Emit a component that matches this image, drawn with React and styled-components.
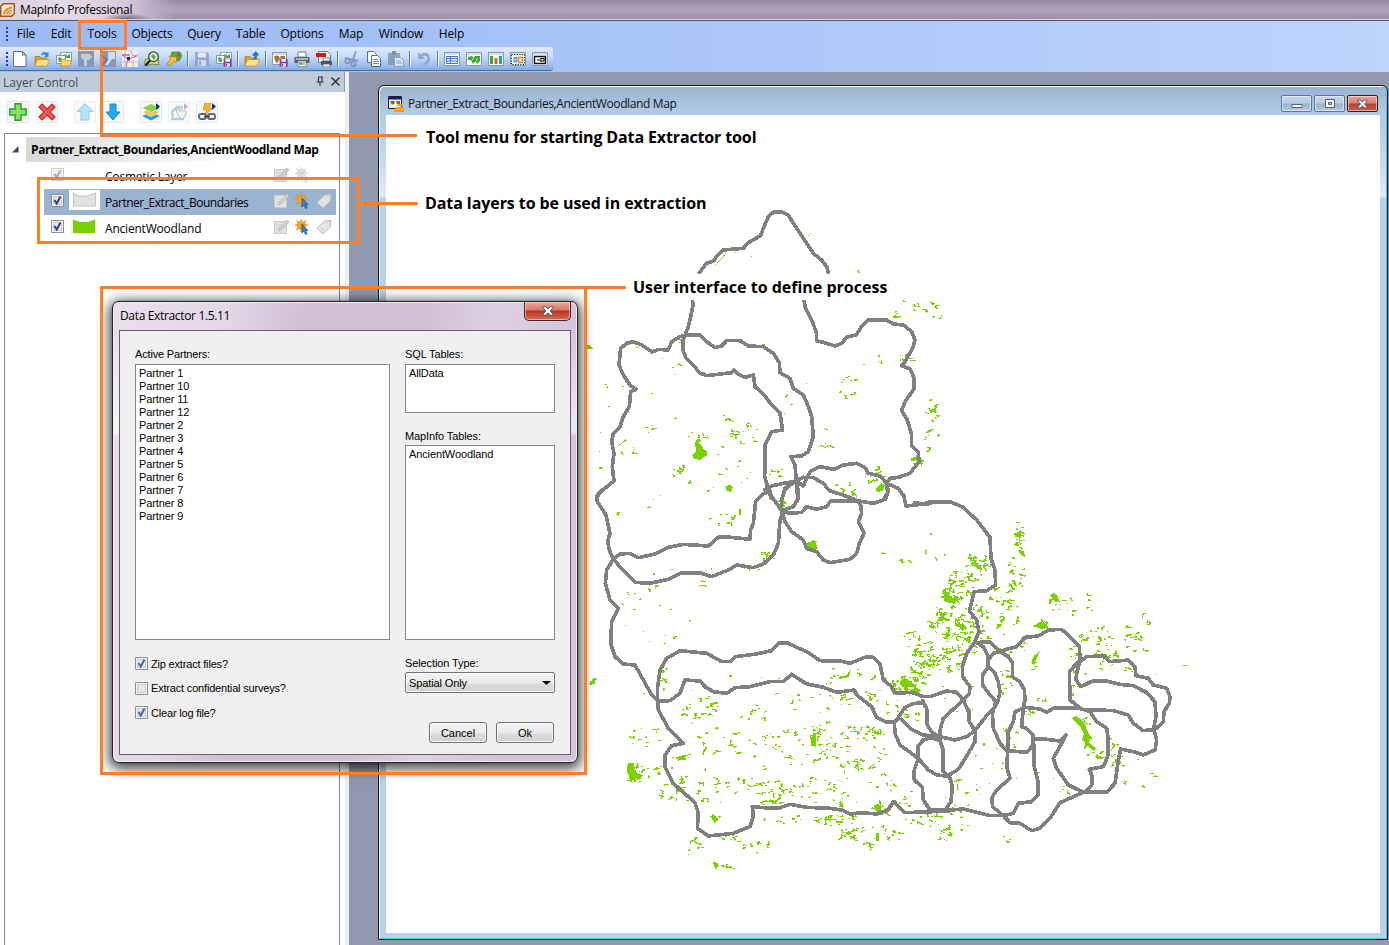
import React from 'react';
import styled, { createGlobalStyle } from 'styled-components';

const ORANGE = '#ff7f27';
const UI = "'Open Sans', 'Noto Sans', sans-serif";

const Global = createGlobalStyle`
  * { box-sizing: border-box; }
  html, body { margin: 0; padding: 0; overflow: hidden; }
`;

const Screen = styled.div`
  position: relative;
  width: 1389px;
  height: 945px;
  overflow: hidden;
  display: flex;
  flex-direction: column;
  background: #9199ae;
  font: 12px ${UI};
  color: #000;
`;

const Text = styled.span`
  white-space: nowrap;
  letter-spacing: ${(p) => p.$ls || 0}px;
`;

/* ---------- application frame ---------- */
const TitleBar = styled.header`
  flex: none;
  height: 21px;
  display: flex;
  align-items: center;
  gap: 5px;
  padding-bottom: 1px;
  border-bottom: 1px solid #5c5361;
  box-shadow: inset 0 -1px 0 #ddd3e2;
  background:
    radial-gradient(ellipse 26px 7px at 127px 20px, #63586a 0%, rgba(99, 88, 106, 0) 100%),
    linear-gradient(90deg, #dccfe0 0, #e5dbe8 60px, #d8cadc 125px, #bdaec6 150px, rgba(172, 157, 184, 0) 175px),
    linear-gradient(180deg, #93859d 0, #a899b3 5px, #b1a3bb 10px, #a091ad 18px);
`;

const MenuBar = styled.nav`
  flex: none;
  height: 26px;
  display: flex;
  align-items: center;
  padding-bottom: 1px;
  background: linear-gradient(90deg, #9dbbf4 0, #a4c2f7 500px, #bdd5fb 1389px);
`;

const MenuItem = styled.span`
  width: ${(p) => p.$w}px;
  text-align: center;
  white-space: nowrap;
  letter-spacing: -0.15px;
`;

const ToolbarRow = styled.div`
  flex: none;
  height: 25px;
  background: linear-gradient(90deg, #9dbbf4 0, #a4c2f7 500px, #bdd5fb 1389px);
`;

const Toolbar = styled.div`
  width: 553px;
  height: 24px;
  display: flex;
  align-items: center;
  border-radius: 0 3px 3px 0;
  border-bottom: 1px solid #3f6fb5;
  background: linear-gradient(180deg, #dfeafc 0, #cadcf8 9px, #a5c3ef 17px, #82abe2 23px);
`;

const ToolCell = styled.span`
  width: 22px;
  height: 22px;
  display: flex;
  align-items: center;
  justify-content: center;
  opacity: ${(p) => (p.$off ? 0.75 : 1)};
`;

const Separator = styled.i`
  width: 2px;
  height: 15px;
  margin: 0 2px;
  border-left: 1px solid #5c7fb8;
  border-right: 1px solid #eff5ff;
`;

const Grip = styled.i`
  width: 2px;
  height: 14px;
  margin: 0 ${(p) => p.$right || 1}px 0 6px;
  background: repeating-linear-gradient(180deg, #27408b 0 2px, transparent 2px 4px);
`;

const Workspace = styled.main`
  flex: 1;
  min-height: 0;
  display: flex;
`;

/* ---------- layer control ---------- */
const Panel = styled.aside`
  flex: none;
  width: 349px;
  display: flex;
  flex-direction: column;
  background: #fff;
  border-right: 4px solid #f0f0f0;
`;

const PanelHeader = styled.div`
  flex: none;
  height: 20px;
  display: flex;
  align-items: center;
  padding: 0 3px 0 3px;
  color: #444b55;
  background: #bfcddb;
  border-right: 1px solid #8d9aa8;
  svg { margin: 0 0 2px 5px; }
  span { flex: 1; }
`;

const PanelTools = styled.div`
  flex: none;
  height: 41px;
  display: flex;
  align-items: center;
  padding: 0 0 1px 7px;
`;

const PanelButton = styled.span`
  width: 22px;
  height: 22px;
  margin-right: ${(p) => p.$gap || 6}px;
  border: 1px solid #e4e7ea;
  border-radius: 2px;
  background: #f7f8f9;
  display: flex;
  align-items: center;
  justify-content: center;
  opacity: ${(p) => (p.$off ? 0.65 : 1)};
`;

const Tree = styled.div`
  flex: 1;
  width: 336px;
  margin-left: 4px;
  padding-top: 3px;
  border: 1px solid #828790;
  border-bottom: 0;
`;

const TreeHead = styled.div`
  height: 26px;
  display: flex;
  align-items: flex-start;
  padding-left: 6px;
  font-weight: 700;
  svg { margin: 8px 7px 0 0; }
`;

const TreeTitle = styled.div`
  height: 25px;
  line-height: 26px;
  padding-left: 5px;
  white-space: nowrap;
  letter-spacing: -0.41px;
  background: linear-gradient(90deg, #d8d8d8, #fff 205px);
`;

const LayerRow = styled.div`
  height: 26px;
  margin: 0 3px 0 39px;
  display: flex;
  align-items: center;
  background: ${(p) => (p.$selected ? '#9ab3d1' : 'transparent')};
`;

const LayerCheck = styled.span`
  width: 25px;
  padding: 0 0 4px 7px;
  line-height: 0;
  opacity: ${(p) => (p.$dim ? 0.45 : 1)};
`;

const Swatch = styled.span`
  width: 31px;
  height: 20px;
  margin-bottom: 4px;
  background: ${(p) => (p.$boxed ? '#fff' : 'transparent')};
  line-height: 0;
`;

const LayerName = styled.span`
  flex: 1;
  padding: 1px 0 0 5px;
  white-space: nowrap;
  letter-spacing: ${(p) => p.$ls || -0.2}px;
`;

const LayerIcons = styled.span`
  width: 64px;
  display: flex;
  gap: 5px;
  padding-left: 2px;
  margin-bottom: 3px;
`;

/* ---------- map window ---------- */
const Desktop = styled.section`
  flex: 1;
  padding: 13px 1px 4px 29px;
`;

const MapWindow = styled.div`
  width: 1010px;
  height: 855px;
  padding: 0 6px 6px;
  display: flex;
  flex-direction: column;
  border: 1px solid #14181e;
  border-radius: 6px 6px 0 0;
  box-shadow: inset 1px 1px 0 #fff, inset -1px -1px 0 #3fd0e4;
  background: linear-gradient(180deg, #98b3d0 0, #b4cce6 29px, #bdd3eb 60px, #dfeaf6 110px, #b9d1ea 112px);
`;

const MapTitle = styled.div`
  flex: none;
  height: 29px;
  display: flex;
  align-items: center;
  padding: 6px 3px 0 3px;
  color: #10151d;
  ${Text} { flex: 1; padding-left: 4px; }
`;

const MapClient = styled.div`
  flex: 1;
  margin-left: 1px;
  margin-right: 1px;
  background: #fff;
  line-height: 0;
`;

const WinButton = styled.span`
  width: 31px;
  height: 17px;
  margin-left: 2px;
  display: flex;
  align-items: center;
  justify-content: center;
  border: 1px solid ${(p) => (p.$close ? '#43131a' : '#5f7794')};
  border-radius: 2px;
  box-shadow: inset 0 0 0 1px rgba(255, 255, 255, 0.5);
  background: ${(p) =>
    p.$close
      ? 'linear-gradient(180deg, #e5a395 0, #d98272 7px, #b7402b 8px, #c9604a 15px)'
      : 'linear-gradient(180deg, #c3d6ea 0, #b6cce3 7px, #98b3d0 8px, #b3cbe4 15px)'};
`;

/* ---------- dialog ---------- */
const Dialog = styled.section`
  position: absolute;
  left: 112px;
  top: 301px;
  width: 466px;
  height: 462px;
  padding: 0 6px 7px;
  display: flex;
  flex-direction: column;
  border: 1px solid #222;
  border-radius: 7px;
  box-shadow: inset 0 0 0 1px #f6eff8, 0 0 1px #222, 0 3px 13px 3px rgba(0, 0, 0, 0.72);
  background:
    linear-gradient(180deg, rgba(255, 255, 255, 0) 30px, rgba(255, 255, 255, 0.65) 130px, rgba(255, 255, 255, 0) 134px),
    linear-gradient(100deg, #eadfed 0, #e4d8e8 110px, #d2bfd6 190px, #d2bfd6 310px, #ded0e3 380px, #d5c3d9 466px);
  font: 11px 'Liberation Sans', Arial, sans-serif;
  letter-spacing: -0.12px;
`;

const DialogTitle = styled.div`
  flex: none;
  height: 28px;
  display: flex;
  justify-content: space-between;
  align-items: flex-start;
  font: 12px ${UI};
  ${Text} { padding: 5px 0 0 1px; }
`;

const DialogClose = styled.span`
  width: 47px;
  height: 19px;
  display: flex;
  align-items: center;
  justify-content: center;
  border: 1px solid #4b2029;
  border-top: 0;
  border-radius: 0 0 5px 5px;
  box-shadow: inset 0 0 0 1px rgba(255, 255, 255, 0.45);
  background: linear-gradient(180deg, #e6a79b 0, #d87767 8px, #b83322 9px, #d66c55 18px);
`;

const DialogBody = styled.div`
  flex: 1;
  padding: 16px 16px 11px 15px;
  display: grid;
  grid-template-columns: 255px 150px;
  column-gap: 15px;
  border: 1px solid #665d6a;
  background: #f0f0f0;
`;

const Column = styled.div`
  display: flex;
  flex-direction: column;
`;

const FieldLabel = styled.div`
  height: ${(p) => p.$h || 17}px;
  line-height: 14px;
  white-space: nowrap;
  letter-spacing: ${(p) => p.$ls || -0.1}px;
`;

const ListBox = styled.div`
  height: ${(p) => p.$h}px;
  margin-bottom: ${(p) => p.$mb}px;
  padding: 2px 3px;
  border: 1px solid #828790;
  background: #fff;
  line-height: 13px;
`;

const CheckRow = styled.label`
  height: 13px;
  margin-bottom: 11.5px;
  display: flex;
  align-items: center;
  gap: 3px;
  white-space: nowrap;
  letter-spacing: -0.18px;
`;

const Select = styled.div`
  height: 21px;
  margin-top: 1px;
  display: flex;
  align-items: center;
  justify-content: space-between;
  padding: 0 3px 0 3px;
  border: 1px solid #707070;
  border-radius: 2px;
  box-shadow: inset 0 0 0 1px #fafafa;
  background: linear-gradient(180deg, #f2f2f2 0, #ebebeb 10px, #dcdcdc 11px, #cfcfcf 20px);
`;

const ButtonRow = styled.div`
  display: flex;
  justify-content: flex-end;
  gap: 9px;
  margin: 29px 1px 0 -20px;
`;

const Button = styled.div`
  width: 58px;
  height: 21px;
  line-height: 20px;
  text-align: center;
  letter-spacing: 0;
  border: 1px solid #707070;
  border-radius: 3px;
  box-shadow: inset 0 0 0 1px #fafafa;
  background: linear-gradient(180deg, #f2f2f2 0, #ebebeb 10px, #dcdcdc 11px, #cfcfcf 20px);
`;

/* ---------- annotations ---------- */
const Frame = styled.div`
  position: absolute;
  left: ${(p) => p.$x}px;
  top: ${(p) => p.$y}px;
  width: ${(p) => p.$w}px;
  height: ${(p) => p.$h}px;
  border: 3px solid ${ORANGE};
`;

const Rule = styled.div`
  position: absolute;
  left: ${(p) => p.$x}px;
  top: ${(p) => p.$y}px;
  width: ${(p) => p.$w}px;
  height: ${(p) => p.$h}px;
  background: ${ORANGE};
`;

const Note = styled.div`
  position: absolute;
  left: ${(p) => p.$x}px;
  top: ${(p) => p.$y}px;
  width: ${(p) => p.$w}px;
  height: 26px;
  background: #fff;
  font: 700 16px/26px 'Open Sans', sans-serif;
  letter-spacing: ${(p) => p.$ls}px;
  white-space: nowrap;
`;

/* ---------- icons ---------- */
const Svg = ({ children, s = 16, h }) => (
  <svg width={s} height={h || s} viewBox={`0 0 ${s} ${h || s}`}>{children}</svg>
);

const Folder = ({ y = 0 }) => (
  <g transform={`translate(0 ${y})`}>
    <path d="M1 13V4h5l1 1.5h6V13z" fill="#d9a02c" stroke="#a5741a" strokeWidth=".7" />
    <path d="M1 13.500l2.500-6.500h12L13 13.500z" fill="#ffe08a" stroke="#c48e25" strokeWidth=".7" />
  </g>
);
const Disk = ({ x = 0, y = 0, k = 1, c = '#7c3f9b' }) => (
  <g transform={`translate(${x} ${y}) scale(${k})`}>
    <path d="M1 1h12l2 2v12H1z" fill={c} />
    <path d="M4 1.500h8v5H4z" fill="#eef" />
    <path d="M4 9h8v6H4z" fill="#dde" />
    <path d="M5 10h2v4H5z" fill={c} />
  </g>
);
const WinBase = ({ children }) => (
  <g>
    <path d="M.5 1.500h15v13H.5z" fill="#fff" stroke="#8496b3" />
    <path d="M1 2h14v2H1z" fill="#d7dfe9" />
    {children}
  </g>
);

const icons = {
  fresh: <path d="M1.500.5h9l3.500 3.500v11.500H1.500zM10.500.5V4H14" fill="#fff" stroke="#5f6f88" />,
  open: <g><Folder y={1.5} /><path d="M7 4c1-3 4-4 6-2l1.500-1v5H10l1.500-1.500C10.500 3 9 3 8 4.500z" fill="#2f8fd8" /></g>,
  openWin: <g><path d="M4.500 1.500h11v9h-11z" fill="#fff" stroke="#7f9abd" /><path d="M7 4l3-1 1 2 3-2v4H7z" fill="#5aa33e" /><path d="M.5 4.500v8h9v-8z" fill="#f4f9ff" stroke="#7f9abd" /><path d="M2 7l2-1 2 2v3H3z" fill="#5aa33e" /><path d="M5 15V8.500h4l1 1h5.500L14 15z" fill="#fbd566" stroke="#b8882a" strokeWidth=".7" /></g>,
  grayA: <g><path d="M0 0h16v16H0z" fill="#8797b8" /><path d="M3 3h9l2 3-3 3H9v6H6V9L3 7z" fill="#c3cde0" /></g>,
  grayB: <g><path d="M0 0h16v16H0z" fill="#8797b8" /><path d="M8 1h7v7h-3l-4 6H5l3-6z" fill="#d3dcea" /><path d="M1 4l6 5-5 6" stroke="#6b7ca0" fill="none" strokeWidth="2" /></g>,
  grid: <g><path d="M0 0h16v16H0z" fill="#f3efe9" /><path d="M9 0l2 5 5-1" stroke="#cf8fc9" fill="none" /><path d="M3 0v16M0 11h16M11 9v7" stroke="#b9b3a6" strokeWidth=".8" /><path d="M0 4l6 4M6 8l-2 8M6 8l9-3" stroke="#c06fc0" fill="none" /><path d="M0 4h8M7 7v3" stroke="#7a3fa0" fill="none" /><path d="M5 6h3v3H5z" fill="#2d1f9a" /></g>,
  find: <g><path d="M1 9l4-2 9 0 1 7-7-1-7 2z" fill="#e9e05a" stroke="#6e8b2b" /><circle cx="9.500" cy="5.700" r="4.800" fill="#dff2d8" stroke="#3f4a44" strokeWidth="1.300" /><path d="M7 5l2-2 3 3-2 3z" fill="#4caf3c" /><path d="M6 9.500L1.500 14.500" stroke="#222" strokeWidth="2.400" /></g>,
  pick: <g><path d="M6 1h8l2 4-3 5-6-1-2-4z" fill="#48b047" stroke="#2b7c2a" strokeWidth=".6" /><circle cx="12.500" cy="4" r="1.700" fill="#e33" /><path d="M3 5l8 1-1 6-2-2-4 5-3-2 4-5z" fill="#f9c433" stroke="#a97412" strokeWidth=".8" /></g>,
  save: <Disk c="#8c9bb8" />,
  saveWin: <g><path d="M4.500 1.500h11v8h-11z" fill="#fff" stroke="#7f9abd" /><path d="M7 4l3-1 1 2 3-2v4H7z" fill="#5aa33e" /><path d="M.5 4.500v8h8v-8z" fill="#f4f9ff" stroke="#7f9abd" /><path d="M2 7l2-1 2 2v3H3z" fill="#5aa33e" /><Disk x={7} y={7} k={0.58} /></g>,
  openBlue: <g><Folder y={1.500} /><path d="M12 0l3 4-2 1c0 3-2 4-4 4 1-1 2-3 1-4l-2-1z" fill="#2878c8" /></g>,
  saveMap: <g><path d="M.5 1.500h14v12H.5z" fill="#fff" stroke="#8a97a8" /><path d="M1 2h13v2H1z" fill="#d7dfe9" /><path d="M2 5l4-.5 2 3-3 5-2-3zM8 5h5v4l-3 1z" fill="#a8752e" /><Disk x={7} y={7} k={0.58} /></g>,
  print: <g><path d="M4 1h8v5H4z" fill="#fff" stroke="#566" strokeWidth=".8" /><path d="M.5 6h15v6H.5z" fill="#59626e" /><path d="M2 7h12v2H2z" fill="#aab4c0" /><path d="M4 10h8v5.500H4z" fill="#fff" stroke="#566" strokeWidth=".6" /><path d="M5 11h3v3H5z" fill="#38b6d8" /><path d="M8 11h3v3H8z" fill="#f2b63a" /></g>,
  pdf: <g><path d="M2.500.5h9l3 3v8h-12z" fill="#fff" stroke="#778" /><path d="M0 2h10v4H0z" fill="#d8141a" /><path d="M5 10h11v4H5z" fill="#4f5a66" /><path d="M7 7h7v3H7zM7 13h7v3H7z" fill="#e9eef3" stroke="#4f5a66" strokeWidth=".7" /></g>,
  cut: <g fill="none" stroke="#7486aa" strokeWidth="1.800"><path d="M12 0L8 11M1 7l13 3" /><circle cx="3.500" cy="10" r="2.200" /><circle cx="9.500" cy="13" r="2.200" /></g>,
  copy: <g fill="#fff" stroke="#566c92"><path d="M1.500.5h6l3 3v8h-9z" /><path d="M5.500 4.500h6l3 3v8h-9z" /><path d="M7 8.500h5M7 10.500h6M7 12.500h6" strokeWidth=".8" /></g>,
  paste: <g><path d="M0 2h12v12H0z" fill="#7c8cac" /><path d="M4 0h4v4H4z" fill="#66789c" /><path d="M6.500 6.500h6l3 3v6h-9z" fill="#edf1f7" stroke="#8192b0" /><path d="M8 10h5M8 12h6" stroke="#8192b0" /></g>,
  undo: <path d="M2 1v7h7L6.500 5.500c3-2 6 0 5 3-1 2-3 3-5 6 5-1 8-4 7.500-8.500-1-5-6-5.500-9.500-2.500z" fill="#8296ba" />,
  browse: <WinBase><path d="M2.500 5.500h11v7h-11z" fill="#e6f0ff" stroke="#3a72cc" /><path d="M3 7.500h10M3 10h10M6.500 5.500v7" stroke="#3a72cc" strokeWidth=".9" /></WinBase>,
  mapWin: <WinBase><path d="M2 6l4-1 1.500 2 1.500-2h5v5l-3 3-1.500-3L7 13 5 9H2z" fill="#33ab2d" /><path d="M6 9l2-2M11 7v3" stroke="#fff" strokeWidth=".8" /></WinBase>,
  graphWin: <WinBase><path d="M2 5h3v8H2z" fill="#33ab2d" /><path d="M6.500 7h3v6h-3z" fill="#f05a18" /><path d="M11 5h3v8h-3z" fill="#1ba5b8" /></WinBase>,
  layoutWin: <WinBase><path d="M1.500 3.500h13v10h-13z" fill="none" stroke="#222" strokeDasharray="1.200 1.400" /><path d="M4 6.500h3v4.500H4z" fill="#9fd0f5" stroke="#2878c8" strokeWidth=".8" /><path d="M8.500 6.500h4v5h-4z" fill="#fff" stroke="#f08018" strokeWidth="1.500" /></WinBase>,
  redistrict: <WinBase><path d="M2.500 5.500h11v7h-11z" fill="#fff" stroke="#111" strokeWidth="1.400" /><path d="M5 9h4v2M8 7.500h4V10H9" fill="none" stroke="#111" strokeWidth="1.200" /></WinBase>,
};

const toolbarItems = [
  'fresh', 'open', 'openWin', 'grayA', 'grayB', 'grid', 'find', 'pick', '|', 'save', 'saveWin', '|', 'openBlue', '|',
  'saveMap', 'print', 'pdf', '|', 'cut', 'copy', 'paste', '|', 'undo', '|', 'browse', 'mapWin', 'graphWin', 'layoutWin', 'redistrict',
];
const disabled = ['cut', 'paste', 'undo', 'save'];

const Check = ({ on, mark = '#2e3f7c' }) => (
  <Svg s={13}>
    <path d="M.5.5h12v12H.5z" fill="#f4f4f4" stroke="#8e8f8f" />
    <path d="M2.500 2.500h8v8h-8z" fill="#e3e6ea" stroke="#c9cdd2" />
    {on && <path d="M3.500 6l2.200 3.500L9.500 2.500" fill="none" stroke={mark} strokeWidth="1.900" />}
  </Svg>
);

const Cross = ({ w = 12 }) => (
  <svg width={w} height="10" viewBox="0 0 12 10">
    <path d="M1 .7h3L6 3l2-2.300h3v1L8.300 5 11 8.300v1H8L6 7 4 9.300H1v-1L3.700 5 1 1.700z" fill="#f4f6f8" stroke="#4d5566" strokeWidth="1" />
  </svg>
);

const PencilIcon = () => (
  <Svg s={16}><path d="M.5 2.500h12v12H.5z" fill="#e2e2e2" stroke="#c9c9c9" /><path d="M2 6h6M2 9h5" stroke="#cfcfcf" /><path d="M4.500 12l1-3L13 1l2 2-8 8z" fill="#d2d2d2" stroke="#b3b3b3" strokeWidth=".8" /></Svg>
);
const SelectIcon = ({ dim }) => (
  <Svg s={16}>
    <path d="M6 0l1.200 3.500L11 1.500 9.300 5l3.700 1-3.700 1.500L11 11 7.200 9.300 6 13 4.800 9.300 1.500 11 3 7.500 0 6l3-1-1.500-3.500 3.300 2z" fill={dim ? '#dcdcdc' : '#f7a41d'} stroke={dim ? '#d0d0d0' : '#d9820a'} strokeWidth=".5" />
    <path d="M7 5v9l2-2 1.500 3.500 1.700-.8L10.700 11.500H13z" fill={dim ? '#e6e6e6' : '#3f83c4'} stroke={dim ? '#cacaca' : '#1c4f88'} strokeWidth=".7" />
  </Svg>
);
const TagIcon = () => (
  <Svg s={16}><path d="M1 9.500L8.500 2 15 1.500 14.500 8 7 15z" fill="#e4e4e4" stroke="#bdbdbd" /><circle cx="12" cy="4.300" r="1.200" fill="#fff" stroke="#bbb" strokeWidth=".6" /><path d="M5 9l3 3" stroke="#c5c5c5" /></Svg>
);

const panelIcons = [
  { gap: 7, art: <path d="M6 .8h6V6h5.200v6H12v5.200H6V12H.8V6H6z" fill="#8ade63" stroke="#2ba02a" strokeWidth="1.500" /> },
  { gap: 16, art: <path d="M4 1l5 5 5-5 3 3-5 5 5 5-3 3-5-5-5 5-3-3 5-5-5-5z" fill="#ee5a50" stroke="#c32a26" strokeWidth="1.200" /> },
  { gap: 6, off: true, art: <path d="M9 .5L17 8.500h-4V17H5V8.500H1z" fill="#8fd6fa" stroke="#4bb0e4" /> },
  { gap: 16, art: <path d="M6 1h6v8h4l-7 8-7-8h4z" fill="#27a8ec" stroke="#1788cc" /> },
  { gap: 6, art: <g><path d="M0 13l9-4 9 4-9 4.500z" fill="#2e9fd6" /><path d="M0 9l9-4 9 4-9 4.500z" fill="#f6c445" stroke="#fff" strokeWidth=".6" /><path d="M0 5l9-4.500 9 4.500-9 4.500z" fill="#8bd24c" stroke="#fff" strokeWidth=".6" /><path d="M14 0l4 3.500-4 3.500z" fill="#12347a" /></g> },
  { gap: 6, off: true, art: <g><path d="M1 16h13M3 14l-1-5 5-5 4 1" stroke="#7fb2d6" strokeWidth="2.400" fill="none" /><path d="M6 7l2-1 2 3V3h2v5h4l-1 6-3 2-4-3z" fill="#e9edf1" stroke="#8b98a6" strokeWidth=".9" /><path d="M14 0l4 3.500-4 3.500z" fill="#7d95b8" /></g> },
  { gap: 0, art: <g><path d="M7 0h6l-2 5h4l-8 7 2-5H5z" fill="#f8b52b" stroke="#c8860f" strokeWidth=".7" /><rect x="1" y="11" width="7" height="5" rx="2" fill="none" stroke="#59687a" strokeWidth="1.800" /><rect x="10" y="11" width="7" height="5" rx="2" fill="none" stroke="#59687a" strokeWidth="1.800" /><path d="M6 13.500h6" stroke="#3e4c5c" strokeWidth="1.600" /><path d="M14 0l4 3.500-4 3.500z" fill="#12347a" /></g> },
];

/* ---------- map artwork ---------- */
const layerNorth = [
  '325,222 350,190 372,182 378,170 400,150 460,145 475,128 512,107 520,85 535,50 550,37 575,35 595,45 610,70 640,115 670,160 695,180 710,200 716,222',
  '307,300 309,315 302,350 295,380 285,405 279,420 279,450 288,475 310,495 330,520 350,527 425,518 432,510 445,523 465,532 490,525 495,560 520,582 545,615 570,640 578,690 545,695 525,735 524,830 535,870 545,900',
  '642,300 645,320 665,360 680,400 680,423 700,427 735,438 755,430 770,412 800,404 815,378 835,360 890,360 910,372 940,375 965,395 975,420 970,440 945,485 935,497 960,507 973,535 973,565 945,605 935,632 952,660 965,705 965,738 985,758 987,785 960,820 925,832 900,835 890,850 893,880 885,902',
  '22,895 25,880 72,843 67,800 72,760 65,725 70,700 90,680 100,650 118,620 122,575 138,568 120,555 100,525 87,495 92,445 110,430 130,425 155,435 187,456 205,448 235,450 245,425 270,410 290,405 330,405 350,425 375,443 395,438 410,422 450,422 475,438 520,440 550,460 568,488 570,518 600,535 610,565 640,585 655,620 665,650 670,710 655,755 635,768 602,770 615,795 618,830 620,870 626,900',
  '520,872 545,858 580,850 610,845 640,832 670,833 700,850 718,872 750,882 800,900',
  '615,840 640,858 660,815 690,800 732,808 760,795 800,790 825,803 835,820 870,828 890,850 925,865 945,895',
  '615,845 585,865 575,900',
];
const layerSouthWest = [
  '75,0 45,25 22,45 22,65 48,105 60,160 53,185 58,210 70,237 100,272 135,307 180,310 235,298 270,280 335,280 365,290 415,270 440,255 490,263 520,252 550,225 565,190 570,120 580,90 610,80 625,55 622,10',
  '70,237 90,222 120,220 145,233 195,222 235,202 280,193 355,198 385,172 405,170 480,178 482,150 490,130 497,65 520,42 545,32',
  '527,0 545,50 575,90 585,125 605,155 640,180 650,205 680,215 700,240 720,248 780,238 800,220 808,190 822,160 805,125 815,100 812,75 800,62',
  '580,95 600,100 635,97 650,80 680,88 710,80 722,63 800,62 850,70 880,60 895,35 890,5',
  '575,90 575,60 585,30 605,10',
  '940,40 948,78 1000,72 1020,65 1080,67',
  '70,237 50,270 46,310 60,360 85,385 65,425 62,490 75,530 100,552 135,555 160,600 185,645 203,660 205,690 235,745 280,790 245,797 225,825 225,860 250,910 315,968 325,1000 322,1045 355,1068 430,1060 480,1040 490,1010 487,980 520,983 565,985 600,973 650,982 720,985 755,990 780,1002 815,998 860,1002 895,990 910,965 945,998 1080,993',
  '203,663 203,620 210,570 230,535 270,512 350,520 395,545 420,545 435,530 500,522 545,512 565,490 590,488 620,502 650,515 690,542 750,543 780,550 830,530 850,532 870,552 880,600 905,620 915,642',
  '203,663 240,662 270,640 285,600 330,603 345,620 370,635 410,640 435,623 480,620 540,605 580,605 605,583 650,612 700,622 740,637 793,630 800,645 845,680 860,712 890,727 915,725 930,712',
];
const layerSouthEast = [
  '100,8 140,13 165,5 210,5 250,22 290,60 330,112 333,175 345,210 347,255 320,272 283,275 268,333 290,360 297,395 285,425 260,460 247,500 248,530 270,560 268,580 245,605 190,655 180,690 180,720',
  '45,580 95,577 130,590 150,590 200,573 230,577 250,600 268,640 268,665 287,695 285,725 265,760 240,800 225,815 200,828 170,825 145,810 115,775 60,735 45,700 43,665',
  '43,668 60,645 75,622 95,612 125,608 130,598',
  '60,655 90,685 130,705 180,710 225,720 260,710 285,692 325,640 345,620 355,600 360,575 355,545 345,520 325,500',
  '125,600 140,625 142,675 155,695 180,715',
  '115,775 113,740 130,720 155,713 180,722 190,750 190,815 210,835 217,860 213,905 195,930 150,930 130,900 127,862 103,840 103,810 115,775',
  '285,425 310,440 322,465 325,500 308,525 308,555 330,585 348,605 337,640 340,685 360,730 380,752 440,757 460,735 460,705 440,685 425,680 430,620 435,600 433,570 420,545 397,530 398,490 385,470 360,455 330,425 285,428',
  '325,500 325,480 340,460 365,452 410,440 435,412 475,408 505,390 545,388 575,415 598,440 600,480 590,520 588,540 603,560 640,542 680,543 720,553 760,557 800,578 825,605 828,650 820,690',
  '600,485 620,470 670,468 690,485 745,480 765,500 768,527 805,535 820,555 860,565 870,590 868,610 852,635 850,665 825,688 790,692 760,670 745,645 700,632 605,628 570,600 568,515 600,480',
  '435,622 480,627 500,637 520,625 600,625 630,635 650,665 680,685 685,720 683,770 670,800 628,808 637,830 635,855 615,877',
  '385,750 383,700 400,665 405,635 435,622',
  '383,757 380,800 390,835 350,870 335,895 338,920 370,947 400,940 415,910 455,905 475,885 475,850 463,800 463,757 460,718 500,718 540,723 558,705 545,730 520,775 530,805 565,855 600,872 610,877 680,877 705,850 715,780 722,747 760,755 790,765 825,750 830,720 822,690',
  '175,933 250,927 330,947 370,947 390,968 420,970 455,992 480,985 510,955 540,908 610,877',
];

// Woodland stands: centre x, centre y, radius x, radius y, count, size class
const stands = [
  [699, 437, 9, 5, 16, 2], [725, 417, 6, 4, 12, 3], [743, 433, 14, 12, 42, 3], [649, 428, 7, 4, 9, 3], [630, 452, 10, 7, 14, 2],
  [672, 470, 9, 6, 16, 3], [640, 346, 4, 2, 9, 3], [678, 341, 5, 2, 10, 3], [775, 472, 9, 4, 14, 3], [762, 345, 6, 2, 3, 2],
  [920, 304, 20, 6, 22, 3], [897, 315, 6, 4, 12, 3], [938, 320, 10, 8, 5, 2], [905, 358, 8, 5, 16, 3], [870, 360, 14, 6, 7, 4],
  [848, 386, 12, 10, 13, 3], [933, 410, 8, 12, 22, 4], [930, 440, 10, 12, 15, 3], [820, 444, 28, 4, 12, 2], [912, 460, 8, 6, 14, 4],
  [874, 474, 12, 9, 26, 4], [845, 488, 14, 7, 22, 3], [710, 458, 50, 36, 42, 2], [820, 400, 45, 30, 16, 2], [660, 385, 55, 40, 22, 2],
  [610, 440, 12, 40, 12, 2], [720, 518, 12, 6, 14, 3], [779, 505, 4, 6, 12, 4], [764, 557, 9, 6, 15, 4], [812, 545, 5, 5, 5, 3],
  [702, 585, 5, 5, 14, 2], [652, 587, 6, 4, 12, 3], [640, 602, 26, 14, 16, 2], [660, 625, 36, 20, 18, 2], [915, 550, 34, 18, 17, 2],
  [640, 506, 35, 22, 9, 3], [700, 570, 70, 5, 20, 1],
  [1018, 535, 6, 15, 36, 4], [1015, 573, 10, 17, 50, 4], [975, 567, 10, 12, 48, 4], [958, 585, 15, 15, 80, 4], [948, 595, 10, 8, 50, 4],
  [940, 618, 18, 14, 80, 3], [970, 620, 14, 18, 80, 4], [1000, 610, 18, 25, 70, 4], [960, 640, 23, 16, 90, 3], [930, 655, 20, 15, 65, 3],
  [907, 684, 18, 9, 70, 4], [923, 665, 15, 14, 80, 4], [900, 640, 18, 10, 20, 3], [950, 660, 18, 12, 60, 3], [998, 645, 32, 12, 40, 2],
  [1053, 603, 10, 8, 22, 3], [1040, 624, 8, 5, 16, 4], [1080, 605, 16, 12, 26, 2], [1095, 640, 18, 15, 64, 3], [1108, 660, 12, 12, 34, 3],
  [1125, 665, 9, 8, 18, 2], [1137, 635, 15, 20, 34, 3], [1072, 650, 8, 10, 16, 3], [1033, 660, 7, 9, 14, 2], [1077, 675, 9, 20, 12, 2],
  [1004, 680, 8, 14, 28, 3], [1012, 735, 12, 18, 22, 2], [1028, 712, 5, 5, 13, 3], [1042, 700, 8, 4, 10, 2], [1084, 725, 6, 6, 12, 4],
  [1088, 742, 5, 12, 16, 4], [1097, 752, 7, 6, 16, 4], [1113, 755, 8, 18, 24, 3], [1135, 775, 22, 16, 13, 2], [1063, 790, 5, 4, 9, 3],
  [840, 674, 9, 4, 8, 2], [665, 680, 5, 13, 15, 2], [700, 712, 20, 15, 46, 3], [752, 712, 13, 9, 22, 3], [720, 740, 30, 17, 35, 3],
  [787, 745, 26, 16, 40, 3], [814, 740, 5, 7, 10, 4], [832, 731, 30, 10, 50, 3], [862, 731, 18, 8, 42, 3], [830, 753, 22, 14, 38, 3],
  [855, 764, 18, 6, 30, 3], [878, 745, 8, 18, 26, 2], [820, 702, 30, 12, 32, 3], [870, 700, 20, 12, 30, 2], [850, 680, 35, 14, 26, 2],
  [645, 737, 16, 10, 26, 3], [633, 771, 12, 12, 60, 4], [652, 768, 12, 8, 30, 3], [668, 790, 18, 12, 34, 3], [680, 757, 8, 2, 11, 4],
  [682, 778, 6, 4, 14, 4], [720, 790, 28, 14, 38, 3], [765, 785, 20, 12, 34, 3], [823, 783, 22, 8, 38, 2], [800, 795, 28, 10, 38, 2],
  [770, 803, 10, 4, 20, 4], [845, 800, 12, 8, 22, 3], [885, 783, 14, 12, 22, 3], [880, 808, 9, 6, 20, 4], [835, 820, 22, 5, 40, 3],
  [790, 818, 28, 6, 30, 2], [870, 835, 30, 10, 50, 3], [845, 836, 12, 8, 20, 3], [730, 838, 9, 5, 24, 4], [755, 848, 14, 6, 28, 3],
  [715, 818, 4, 5, 12, 3], [695, 848, 12, 9, 15, 3], [725, 866, 10, 2, 8, 4], [910, 795, 16, 12, 22, 3], [925, 820, 22, 8, 35, 3],
  [943, 832, 9, 9, 26, 3], [960, 790, 25, 16, 28, 2], [955, 820, 18, 12, 22, 2], [985, 758, 24, 26, 20, 2], [1010, 838, 12, 3, 8, 2],
  [905, 710, 20, 9, 24, 2], [750, 690, 110, 15, 34, 2], [760, 770, 115, 40, 90, 2], [592, 683, 4, 2, 7, 3], [587, 347, 3, 2, 4, 4],
  [930, 700, 55, 20, 34, 2], [1050, 780, 100, 14, 12, 2], [1165, 670, 30, 15, 4, 2],
];

const groves = [
  'M692 455l4-4-1-8 2-4 3 1-1 4 3 1 1 4 4 2v5l-4 1-2 3-7-1z',
  'M806 543l4-1 3-3 3 4 2 6-5 1-5-3z', 'M725 486l5-1 3 2-2 5-4-1z', 'M811 739l3-6 2 1v12l-5 0z',
  'M1072 718l4-2 5 3 4 6 3 7 3 5-2 6 7 5-2 3-6-5-4 3 1-6-3-3 2-6-3-6-5-5z', 'M1035 625l5-3 7 2 1 4-6 1-5-1z',
  'M1050 595l4-2 4 4 1 4-4 1z', 'M900 681l5-3 7 4-1 5-6 1-5-3z', 'M943 596l5-3 4 5 6 1-3 5-10-2z',
  'M627 769l2-6 5 0 0 7 4 4 5 1-3 5-6-3-3 6-2-6z', 'M675 758l8-3 9-1-7 3 0 3-8-1z', 'M713 862l5 1 1 3-4 3z',
  'M720 865l8 1 8 3-9-1z', 'M874 805h7v6h-5l-2-2z', 'M876 833h3v8h-3z', 'M710 816l4-1 4 4-3 4z', 'M1014 533l6-1 0 5-5 0z',
  'M1018 550l6 1 1 6-4-2z', 'M840 676l6 0 5-7-2 8-10 2z', 'M1031 663l3-7 6-5-3 7-3 7z', 'M876 489l5-6 4 2-2 6-6 1z',
  'M911 458l6-2 1 4-7 1z', 'M931 409l5-1v5l-5-1z', 'M739 509h2v6h-2z', 'M938 617h7v3l-5 1z', 'M958 625l5-2 3 4-4 4z',
  'M911 690l5-2 4 3-4 4z', 'M845 832l5-1 2 3-5 1z', 'M836 821h7v2h-7z', 'M587 345h3l3 4h-6z', 'M590 681l5-1 0 3-5 2z',
];

// Each tree patch is a short random walk over one-pixel cells.
function buildWoodland() {
  let seed = 20117;
  const rnd = () => {
    seed = (seed * 1664525 + 1013904223) % 4294967296;
    return seed / 4294967296;
  };
  let d = '';
  stands.forEach(([cx, cy, rx, ry, n, m]) => {
    const patches = Math.ceil(n * 0.42);
    for (let i = 0; i < patches; i += 1) {
      const a = rnd() * Math.PI * 2;
      const r = Math.sqrt(rnd());
      let x = Math.round(cx + Math.cos(a) * rx * r);
      let y = Math.round(cy + Math.sin(a) * ry * r);
      const steps = 1 + Math.floor(rnd() * rnd() * m * 5);
      const lean = rnd() > 0.5 ? 1 : -1;
      for (let k = 0; k < steps; k += 1) {
        const w = rnd() > 0.6 ? 2 : 1;
        d += `M${x} ${y}h${w}v1h${-w}z`;
        const t = rnd();
        if (t < 0.35) x += 1;
        else if (t < 0.5) x -= 1;
        else if (t < 0.85) y += lean;
        else { x += 1; y -= lean; }
      }
    }
  });
  return d;
}
const woodland = buildWoodland();

const Boundaries = ({ x, y, lines }) => (
  <g transform={`translate(${x} ${y}) scale(0.33333)`} fill="none" stroke="#808080" strokeWidth="11" strokeLinejoin="round">
    {lines.map((pts) => <polyline key={pts} points={pts} />)}
  </g>
);

const MapArt = () => (
  <svg width="994" height="817" viewBox="386 115 994 817" shapeRendering="crispEdges">
    <path d={woodland} fill="#7bd100" />
    <path d={groves.join('')} fill="#7bd100" />
    <path d="M715 265l6-6 6-7M808 236l3-3M735 252h1M751 256h1M857 270h2v2h-2z" stroke="#7bd100" fill="none" strokeDasharray="2 1" />
    <Boundaries x={590} y={200} lines={layerNorth} />
    <Boundaries x={590} y={480} lines={layerSouthWest} />
    <Boundaries x={880} y={500} lines={layerSouthEast} />
  </svg>
);

const menus = [['File', 32], ['Edit', 38], ['Tools', 44], ['Objects', 56], ['Query', 48], ['Table', 45], ['Options', 58], ['Map', 40], ['Window', 60], ['Help', 41]];
const partners = [1, 10, 11, 12, 2, 3, 4, 5, 6, 7, 8, 9];

export default function App() {
  return (
    <Screen>
      <Global />
      <TitleBar>
        <Svg s={15}>
          <path d="M0 4l3-3h12v11l-3 3H0z" fill="#a8521a" />
          <path d="M1.500 4.500L4 2.500h9.500v9L11 13.500H1.500z" fill="#fff3e4" />
          <path d="M3 12.500c0-4 3-7 9-8.500v7l-2 1.500z" fill="#ef8a35" />
          <path d="M5 12.500c1-3 3-4.500 7-5.500M8 12.500c0-1.500 2-2.500 4-3" stroke="#fff3e4" strokeWidth=".9" fill="none" />
        </Svg>
        <Text $ls={-0.33}>MapInfo Professional</Text>
      </TitleBar>
      <MenuBar>
        <Grip $right={2} />
        {menus.map(([name, w]) => <MenuItem key={name} $w={w}>{name}</MenuItem>)}
      </MenuBar>
      <ToolbarRow>
        <Toolbar>
          <Grip $right={1} />
          {toolbarItems.map((id, i) =>
            id === '|' ? <Separator key={i} /> : <ToolCell key={id} $off={disabled.includes(id)}><Svg>{icons[id]}</Svg></ToolCell>
          )}
        </Toolbar>
      </ToolbarRow>
      <Workspace>
        <Panel>
          <PanelHeader>
            <Text>Layer Control</Text>
            <Svg s={10}><path d="M3 1h5M3.500 1v5M7 1v5M1.500 6h7M5 6v4" stroke="#333" fill="none" strokeWidth="1.100" /></Svg>
            <Svg s={11}><path d="M1.500 1.500l8 8M9.500 1.500l-8 8" stroke="#333" strokeWidth="1.500" /></Svg>
          </PanelHeader>
          <PanelTools>
            {panelIcons.map((b, i) => <PanelButton key={i} $gap={b.gap} $off={b.off}><Svg s={18}>{b.art}</Svg></PanelButton>)}
          </PanelTools>
          <Tree>
            <TreeHead>
              <Svg s={8}><path d="M7.500 1v6.500H1z" fill="#444" /></Svg>
              <TreeTitle>Partner_Extract_Boundaries,AncientWoodland Map</TreeTitle>
            </TreeHead>
            <LayerRow>
              <LayerCheck $dim><Check on /></LayerCheck>
              <Swatch />
              <LayerName>Cosmetic Layer</LayerName>
              <LayerIcons><PencilIcon /><SelectIcon dim /></LayerIcons>
            </LayerRow>
            <LayerRow $selected>
              <LayerCheck><Check on /></LayerCheck>
              <Swatch $boxed><Svg s={31} h={20}><path d="M4.500 3.500l6 2.500h8l8-3v13h-22z" fill="#e2e2e2" stroke="#c4c4c4" /></Svg></Swatch>
              <LayerName $ls={-0.47}>Partner_Extract_Boundaries</LayerName>
              <LayerIcons><PencilIcon /><SelectIcon /><TagIcon /></LayerIcons>
            </LayerRow>
            <LayerRow>
              <LayerCheck><Check on /></LayerCheck>
              <Swatch><Svg s={31} h={20}><path d="M4 3.500l7 2.500h8l7-2.500V17H4z" fill="#7bd100" /></Svg></Swatch>
              <LayerName>AncientWoodland</LayerName>
              <LayerIcons><PencilIcon /><SelectIcon /><TagIcon /></LayerIcons>
            </LayerRow>
          </Tree>
        </Panel>
        <Desktop>
          <MapWindow>
            <MapTitle>
              <Svg s={16}>
                <path d="M.5.5h13v12H.5z" fill="#f4f4f4" stroke="#222" />
                <path d="M1 1h12v2.500H1z" fill="#15157c" />
                <path d="M2 5h4l1 2-3 2zM8 5h4v3H9z" fill="#666" />
                <path d="M10 8h5v2h-6zM8 11h8v2H7zM6 14h10v2H6z" fill="#f90" />
              </Svg>
              <Text $ls={-0.38}>Partner_Extract_Boundaries,AncientWoodland Map</Text>
              <WinButton><Svg s={12}><path d="M1 6.500h10v3H1z" fill="#fff" stroke="#59616f" /></Svg></WinButton>
              <WinButton><Svg s={12}><path d="M1.500 1.500h9v8h-9z" fill="#fff" stroke="#59616f" /><path d="M4.500 4.500h3v2h-3z" fill="#9cb" stroke="#59616f" /></Svg></WinButton>
              <WinButton $close><Cross w={11} /></WinButton>
            </MapTitle>
            <MapClient><MapArt /></MapClient>
          </MapWindow>
        </Desktop>
      </Workspace>

      <Dialog>
        <DialogTitle>
          <Text $ls={-0.34}>Data Extractor 1.5.11</Text>
          <DialogClose><Cross /></DialogClose>
        </DialogTitle>
        <DialogBody>
          <Column>
            <FieldLabel $ls={-0.17}>Active Partners:</FieldLabel>
            <ListBox $h={276} $mb={17}>{partners.map((n) => <div key={n}>Partner {n}</div>)}</ListBox>
            <CheckRow><Check on mark="#4a62a8" />Zip extract files?</CheckRow>
            <CheckRow><Check mark="#4a62a8" />Extract confidential surveys?</CheckRow>
            <CheckRow><Check on mark="#4a62a8" />Clear log file?</CheckRow>
          </Column>
          <Column>
            <FieldLabel>SQL Tables:</FieldLabel>
            <ListBox $h={49} $mb={16}>AllData</ListBox>
            <FieldLabel $h={16}>MapInfo Tables:</FieldLabel>
            <ListBox $h={195} $mb={16}>AncientWoodland</ListBox>
            <FieldLabel $h={15}>Selection Type:</FieldLabel>
            <Select>
              <span>Spatial Only</span>
              <Svg s={9}><path d="M0 3h9L4.500 7z" fill="#000" /></Svg>
            </Select>
            <ButtonRow><Button>Cancel</Button><Button>Ok</Button></ButtonRow>
          </Column>
        </DialogBody>
      </Dialog>

      <Note $x={426} $y={124} $w={340} $ls={-0.13}>Tool menu for starting Data Extractor tool</Note>
      <Note $x={425} $y={190} $w={290} $ls={-0.08}>Data layers to be used in extraction</Note>
      <Note $x={633} $y={274} $w={262} $ls={0}>User interface to define process</Note>
      <Frame $x={78} $y={20} $w={49} $h={30} />
      <Rule $x={100} $y={49} $w={3} $h={88} />
      <Rule $x={100} $y={134} $w={317} $h={3} />
      <Frame $x={37} $y={177} $w={323} $h={67} />
      <Rule $x={357} $y={202} $w={61} $h={3} />
      <Frame $x={100} $y={286} $w={487} $h={489} />
      <Rule $x={586} $y={286} $w={40} $h={3} />
    </Screen>
  );
}
